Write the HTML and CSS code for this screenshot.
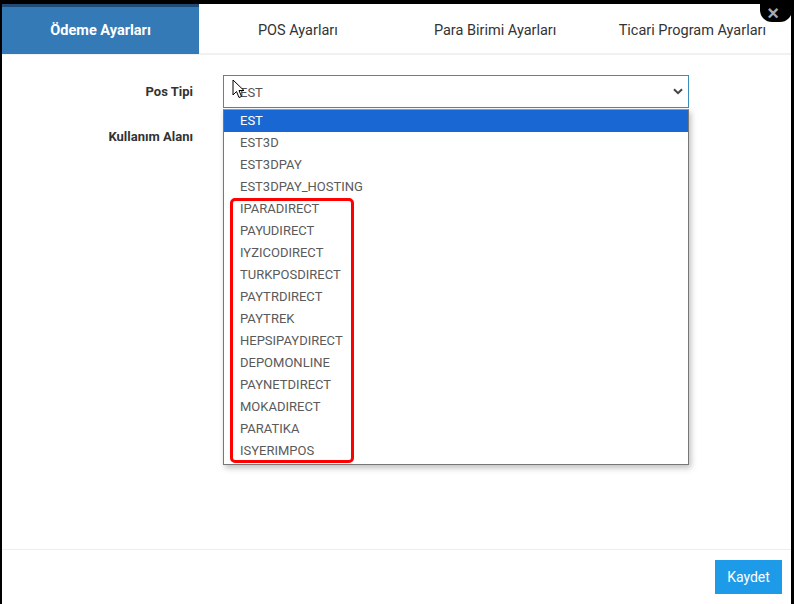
FILE: index.html
```html
<!DOCTYPE html>
<html lang="tr">
<head>
    <meta charset="UTF-8">
    <meta name="viewport" content="width=device-width, initial-scale=1.0">
    <title>Ödeme Ayarları</title>
    <link rel="stylesheet" href="styles.css">
</head>
<body>
    <div class="modal">
        <button class="close-btn" type="button">&times;</button>

        <ul class="tabs">
            <li class="tab active">Ödeme Ayarları</li>
            <li class="tab">POS Ayarları</li>
            <li class="tab">Para Birimi Ayarları</li>
            <li class="tab">Ticari Program Ayarları</li>
        </ul>

        <div class="tab-body">
            <div class="form-row">
                <label class="form-label">Pos Tipi</label>
                <div class="select-wrap">
                    <div class="select">
                        <span class="select-value">EST</span>
                        <svg class="chevron" width="10" height="7" viewBox="0 0 10 7">
                            <path d="M1 1.2 L5 5.2 L9 1.2" fill="none" stroke="#444" stroke-width="2"/>
                        </svg>
                    </div>

                    <!-- open option list -->
                    <ul class="options">
                        <li class="option selected">EST</li>
                        <li class="option">EST3D</li>
                        <li class="option">EST3DPAY</li>
                        <li class="option">EST3DPAY_HOSTING</li>
                        <li class="option">IPARADIRECT</li>
                        <li class="option">PAYUDIRECT</li>
                        <li class="option">IYZICODIRECT</li>
                        <li class="option">TURKPOSDIRECT</li>
                        <li class="option">PAYTRDIRECT</li>
                        <li class="option">PAYTREK</li>
                        <li class="option">HEPSIPAYDIRECT</li>
                        <li class="option">DEPOMONLINE</li>
                        <li class="option">PAYNETDIRECT</li>
                        <li class="option">MOKADIRECT</li>
                        <li class="option">PARATIKA</li>
                        <li class="option">ISYERIMPOS</li>
                    </ul>
                    <div class="highlight-box"></div>

                    <svg class="cursor" width="14" height="20" viewBox="0 0 14 20">
                        <path d="M1 1 L1 16 L4.5 12.5 L7 18.5 L9.5 17.5 L7 11.5 L12 11.5 Z" fill="#fff" stroke="#000" stroke-width="1" stroke-linejoin="round"/>
                    </svg>
                </div>
            </div>
            <div class="form-row">
                <label class="form-label">Kullanım Alanı</label>
                <div></div>
            </div>
        </div>

        <div class="modal-footer">
            <button class="btn-save" type="button">Kaydet</button>
        </div>
    </div>
</body>
</html>
```

FILE: styles.css
```css
body {
    margin: 0;
    background-color: #000;
    font-family: Roboto, "Open Sans", sans-serif;
    overflow: hidden;
}
.modal {
    position: relative;
    margin: 4px 0 0 2px;
    width: 789px;
    height: 600px;
    background-color: #fff;
    display: flex;
    flex-direction: column;
}
.close-btn {
    position: absolute;
    top: -4px;
    right: -1px;
    width: 32px;
    height: 22px;
    border: none;
    border-radius: 0 0 12px 12px;
    background-color: #000;
    color: #aaa;
    font-size: 20px;
    font-weight: bold;
    line-height: 22px;
    padding: 2px 6px 0 0;
    z-index: 5;
}
.tabs {
    list-style: none;
    margin: 0;
    padding: 0;
    display: flex;
    border-bottom: 2px solid #f1f1f1;
}
.tab {
    flex: 1;
    height: 46px;
    border-top: 3px solid transparent;
    display: flex;
    align-items: center;
    justify-content: center;
    font-size: 14.5px;
    color: #333;
}
.tab.active {
    background-color: #337ab7;
    border-top-color: #1e4b78;
    color: #fff;
    font-weight: bold;
    margin-bottom: -1px;
    height: 47px;
}
.tab-body {
    flex: 1;
    padding-top: 20px;
}
.form-row {
    display: grid;
    grid-template-columns: 191px 466px;
    column-gap: 30px;
    margin-bottom: 12px;
}
.form-label {
    text-align: right;
    font-size: 13px;
    font-weight: bold;
    color: #333;
    line-height: 33px;
}
.select-wrap {
    position: relative;
}
.select {
    height: 31px;
    border: 1px solid #3c8dbc;
    display: flex;
    align-items: center;
    justify-content: space-between;
    padding: 0 5px 0 16px;
    font-size: 13px;
    color: #555;
}
.select-value {
    padding-top: 2px;
}
.options {
    position: absolute;
    top: 34px;
    left: 0;
    width: 464px;
    margin: 0;
    padding: 0 0 2px;
    list-style: none;
    background-color: #fff;
    border: 1px solid #777;
    border-top-color: #999;
    box-shadow: 2px 3px 6px rgba(0,0,0,0.25);
    z-index: 2;
}
.option {
    height: 22px;
    line-height: 22px;
    padding-left: 16px;
    font-size: 13px;
    color: #5a5a5a;
}
.option.selected {
    background-color: #1967d2;
    color: #fff;
}
.highlight-box {
    position: absolute;
    top: 123px;
    left: 7px;
    width: 118px;
    height: 259px;
    border: 3px solid #f00;
    border-radius: 5px;
    z-index: 3;
}
.cursor {
    position: absolute;
    top: 4px;
    left: 9px;
    z-index: 4;
}
.modal-footer {
    border-top: 1px solid #eee;
    height: 44px;
    padding: 10px 9px 0 0;
    display: flex;
    justify-content: flex-end;
    align-items: flex-start;
}
.btn-save {
    width: 67px;
    height: 34px;
    border: none;
    background-color: #1e9be8;
    color: #fff;
    font-family: inherit;
    font-size: 14px;
}
```
